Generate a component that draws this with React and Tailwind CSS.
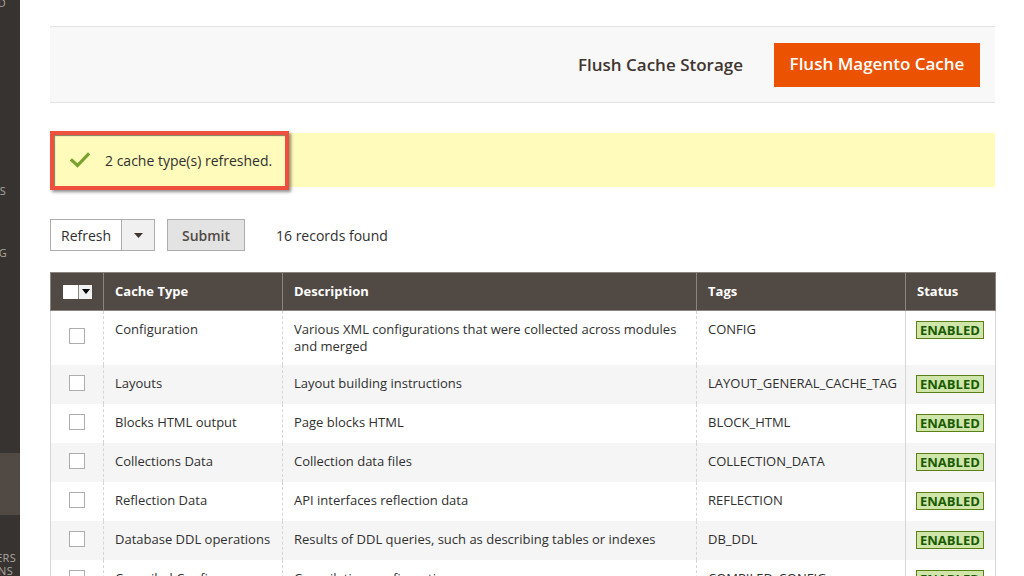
import React from "react";

const rows = [
  { type: "Configuration", desc: "Various XML configurations that were collected across modules and merged", tag: "CONFIG", h: "h-[54px]" },
  { type: "Layouts", desc: "Layout building instructions", tag: "LAYOUT_GENERAL_CACHE_TAG", h: "h-[39px]" },
  { type: "Blocks HTML output", desc: "Page blocks HTML", tag: "BLOCK_HTML", h: "h-[39px]" },
  { type: "Collections Data", desc: "Collection data files", tag: "COLLECTION_DATA", h: "h-[39px]" },
  { type: "Reflection Data", desc: "API interfaces reflection data", tag: "REFLECTION", h: "h-[39px]" },
  { type: "Database DDL operations", desc: "Results of DDL queries, such as describing tables or indexes", tag: "DB_DDL", h: "h-[39px]" },
  { type: "Compiled Config", desc: "Compilation configuration", tag: "COMPILED_CONFIG", h: "h-[39px]" },
];

function SideLabel({ text, className = "" }) {
  return (
    <div className={"flex shrink-0 justify-end whitespace-nowrap text-[11px] leading-[12px] tracking-wide text-[#aaa6a0] " + className}>
      {text}
    </div>
  );
}

export default function App() {
  return (
    <div
      className="flex h-[576px] w-[1024px] overflow-hidden bg-white text-[#303030]"
      style={{ fontFamily: "'Open Sans', 'Noto Sans', sans-serif" }}
    >
      {/* Sidebar */}
      <div className="flex h-full w-[20px] shrink-0 flex-col overflow-hidden bg-[#373330]">
        <SideLabel text="DASHBOARD" className="-mt-[3px] pr-[14px]" />
        <div className="h-[176px] shrink-0" />
        <SideLabel text="STORES" className="pr-[14px]" />
        <div className="h-[50px] shrink-0" />
        <SideLabel text="CATALOG" className="pr-[13px]" />
        <div className="h-[194px] shrink-0" />
        <div className="h-[62px] shrink-0 bg-[#514943]" />
        <div className="h-[36px] shrink-0" />
        <SideLabel text="PARTNERS" className="pr-[4px] leading-[13px]" />
        <SideLabel text="EXTENSIONS" className="pr-[7px] leading-[13px]" />
      </div>

      {/* Main */}
      <div className="flex min-w-0 flex-1 flex-col pl-[30px] pr-[29px] pt-[26px]">
        {/* Header actions */}
        <div className="flex h-[77px] shrink-0 items-center justify-end border-y border-[#e3e3e3] bg-[#f8f8f8] pr-[15px]">
          <span className="mr-[31px] text-[17px] font-semibold text-[#41362f]">Flush Cache Storage</span>
          <button className="flex h-[44px] w-[206px] items-center justify-center bg-[#eb5202] pb-[2px] text-[17px] font-semibold text-white">
            Flush Magento Cache
          </button>
        </div>

        {/* Message */}
        <div className="relative mt-[30px] flex h-[54px] shrink-0 items-center bg-[#fffbbb] pl-[20px]">
          <svg width="20" height="16" viewBox="0 0 20 16" className="mr-[15px]">
            <path d="M2 8.5 L7.5 13.5 L18 2.5" fill="none" stroke="#79a22e" strokeWidth="3.2" strokeLinecap="square" />
          </svg>
          <span className="text-[14px] text-[#303030]">2 cache type(s) refreshed.</span>
          <div className="pointer-events-none absolute left-0 top-[-2px] h-[59px] w-[239px] border-[4px] border-[#ef4f3d] shadow-[2px_2px_3px_rgba(0,0,0,0.45),inset_1px_1px_1px_rgba(0,0,0,0.5)]" />
        </div>

        {/* Actions row */}
        <div className="mt-[32px] flex h-[32px] shrink-0 items-center">
          <div className="flex h-[32px] w-[105px] border border-[#adadad] bg-white">
            <span className="flex flex-1 items-center pl-[10px] text-[14px] text-[#303030]">Refresh</span>
            <span className="flex w-[33px] items-center justify-center border-l border-[#adadad] bg-[#f0f0f0]">
              <svg width="9" height="5" viewBox="0 0 9 5">
                <path d="M0 0 L9 0 L4.5 5 Z" fill="#41362f" />
              </svg>
            </span>
          </div>
          <button className="ml-[12px] flex h-[32px] w-[78px] items-center justify-center border border-[#adadad] bg-[#e3e3e3] text-[14px] font-semibold text-[#514943]">
            Submit
          </button>
          <span className="ml-[31px] text-[14px] text-[#303030]">16 records found</span>
        </div>

        {/* Table */}
        <table className="mt-[21px] w-[945px] shrink-0 table-fixed border-collapse text-[13px] leading-[17px]">
          <colgroup>
            <col className="w-[53px]" />
            <col className="w-[179px]" />
            <col className="w-[414px]" />
            <col className="w-[209px]" />
            <col className="w-[90px]" />
          </colgroup>
          <thead>
            <tr className="h-[38px] bg-[#514943] text-left text-white">
              <th className="border border-[#8a837f] p-0 align-middle">
                <div className="flex justify-center pl-[1px]">
                  <div className="flex h-[14px]">
                    <span className="h-[14px] w-[15px] bg-white" />
                    <span className="flex h-[14px] w-[14px] items-center justify-center border-l border-[#8a837f] bg-[#f0f0f0]">
                      <svg width="8" height="5" viewBox="0 0 8 5">
                        <path d="M0 0 L8 0 L4 5 Z" fill="#000" />
                      </svg>
                    </span>
                  </div>
                </div>
              </th>
              <th className="border border-[#8a837f] px-[11px] font-bold">Cache Type</th>
              <th className="border border-[#8a837f] px-[11px] font-bold">Description</th>
              <th className="border border-[#8a837f] px-[11px] font-bold">Tags</th>
              <th className="border border-[#8a837f] px-[11px] font-bold">Status</th>
            </tr>
          </thead>
          <tbody>
            {rows.map((r, i) => (
              <tr key={r.type} className={(i % 2 === 1 ? "bg-[#f5f5f5] " : "bg-white ") + r.h}>
                <td className="border-l border-solid border-[#d6d6d6] p-0 align-middle">
                  <div className="flex justify-center">
                    <span className="mb-[3px] block h-[16px] w-[16px] border border-[#adadad] bg-white" />
                  </div>
                </td>
                <td className="border-l border-dashed border-[#d6d6d6] px-[11px] pt-[10px] align-top">{r.type}</td>
                <td className="border-l border-dashed border-[#d6d6d6] px-[11px] pt-[10px] align-top">{r.desc}</td>
                <td className="border-l border-dashed border-[#d6d6d6] px-[11px] pt-[10px] align-top">{r.tag}</td>
                <td className="border-x border-l-dashed border-[#d6d6d6] px-[10px] pt-[10px] align-top">
                  <span className="inline-block border border-[#5b8116] bg-[#d0e5a9] px-[3px] text-[13px] font-bold leading-[16px] text-[#185b00]">
                    ENABLED
                  </span>
                </td>
              </tr>
            ))}
          </tbody>
        </table>
      </div>
    </div>
  );
}
